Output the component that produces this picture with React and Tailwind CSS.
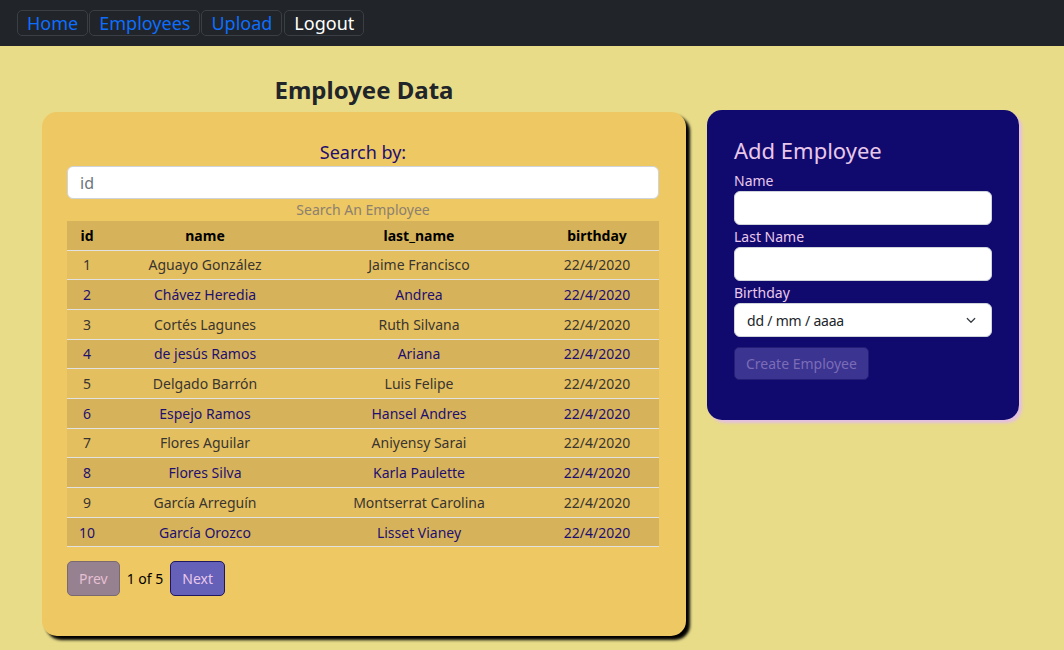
import React from "react";

const rows = [
  { id: 1, name: "Aguayo González", last: "Jaime Francisco" },
  { id: 2, name: "Chávez Heredia", last: "Andrea" },
  { id: 3, name: "Cortés Lagunes", last: "Ruth Silvana" },
  { id: 4, name: "de jesús Ramos", last: "Ariana" },
  { id: 5, name: "Delgado Barrón", last: "Luis Felipe" },
  { id: 6, name: "Espejo Ramos", last: "Hansel Andres" },
  { id: 7, name: "Flores Aguilar", last: "Aniyensy Sarai" },
  { id: 8, name: "Flores Silva", last: "Karla Paulette" },
  { id: 9, name: "García Arreguín", last: "Montserrat Carolina" },
  { id: 10, name: "García Orozco", last: "Lisset Vianey" },
];

// Top navigation bar
const Navbar = () => {
  const links = ["Home", "Employees", "Upload"];
  return (
    <nav className="h-[46px] bg-[#212529] flex items-center pl-[17px] gap-[1px]">
      {links.map((l) => (
        <a
          key={l}
          href="#"
          className="h-[26px] px-[9px] flex items-center border border-[#3a3f45] rounded-[5px] text-[18px] text-[#0d6efd]"
        >
          {l}
        </a>
      ))}
      <button className="ml-[1px] h-[26px] px-[9px] flex items-center border border-[#3a3f45] rounded-[5px] text-[18px] text-white">
        Logout
      </button>
    </nav>
  );
};

const EmployeeTable = () => (
  <table className="w-full border-collapse text-[14px] text-center">
    <thead>
      <tr className="bg-[#d6b35a] h-[29px] border-b border-[#e2e2e2]">
        <th className="w-[40px] font-bold text-black">id</th>
        <th className="w-[196px] font-bold text-black">name</th>
        <th className="w-[232px] font-bold text-black">last_name</th>
        <th className="font-bold text-black">birthday</th>
      </tr>
    </thead>
    <tbody>
      {rows.map((r, i) => (
        <tr
          key={r.id}
          className={
            i % 2 === 0
              ? "bg-[#e4bf5f] text-[#3a3530] h-[29.7px] border-b border-[#e2e2e2]"
              : "bg-[#d6b35a] text-[#1f0f70] h-[29.7px] border-b border-[#e2e2e2]"
          }
        >
          <td>{r.id}</td>
          <td>{r.name}</td>
          <td>{r.last}</td>
          <td>22/4/2020</td>
        </tr>
      ))}
    </tbody>
  </table>
);

const Field = ({ label, children }) => (
  <div className="flex flex-col">
    <label className="text-[14px] text-[#e8c8ea] leading-[20px]">{label}</label>
    {children}
  </div>
);

export default function App() {
  return (
    <div
      className="min-h-[650px] bg-[#e8dc88]"
      style={{ fontFamily: '"Noto Sans", "Open Sans", sans-serif' }}
    >
      <Navbar />
      <div className="flex items-start pl-[42px] pt-[28px] gap-[21px]">
        {/* Left column: employee list */}
        <div className="w-[644px] flex flex-col items-center">
          <h1 className="text-[24px] font-bold text-[#212529] leading-[32px] mb-[6px]">Employee Data</h1>
          <div className="w-full h-[524px] bg-[#eec862] rounded-[15px] shadow-[4px_4px_3px_#000] pl-[25px] pr-[27px] pt-[28px]">
            <p className="text-center text-[18px] text-[#1f0f70] leading-[24px] mb-[2px]">Search by:</p>
            <input
              placeholder="id"
              className="w-full h-[33px] bg-white rounded-[6px] border border-[#ced4da] px-[12px] text-[16px] placeholder:text-[#6c757d] outline-none"
            />
            <p className="text-center text-[14px] text-[#8c8070] leading-[22px]">Search An Employee</p>
            <EmployeeTable />
            <div className="flex items-center gap-[7px] mt-[14px]">
              <button className="h-[35px] px-[11px] bg-[#968190] border border-[#7a6a70] rounded-[5px] text-[14px] text-[#e5bfd2]">
                Prev
              </button>
              <span className="text-[14px] text-black">1 of 5</span>
              <button className="h-[35px] px-[11px] bg-[#6560b8] border border-[#1f1860] rounded-[5px] text-[14px] text-[#e8c8ea]">
                Next
              </button>
            </div>
          </div>
        </div>

        {/* Right column: create form */}
        <div className="w-[312px] h-[310px] mt-[36px] bg-[#110a6e] rounded-[15px] shadow-[3px_3px_3px_#e4c0e0] px-[27px] pt-[25px]">
          <h2 className="text-[22px] text-[#e8c8ea] leading-[30px] mb-[6px]">Add Employee</h2>
          <div className="flex flex-col gap-[2px]">
            <Field label="Name">
              <input className="h-[34px] bg-white rounded-[6px] border border-[#ced4da] outline-none" />
            </Field>
            <Field label="Last Name">
              <input className="h-[34px] bg-white rounded-[6px] border border-[#ced4da] outline-none" />
            </Field>
            <Field label="Birthday">
              <div className="h-[34px] bg-white rounded-[6px] border border-[#ced4da] flex items-center justify-between pl-[12px] pr-[14px]">
                <span className="text-[14px] text-[#212529] tracking-[-0.2px]">dd / mm / aaaa</span>
                <svg width="12" height="12" viewBox="0 0 16 16" fill="none" stroke="#343a40" strokeWidth="1.6" strokeLinecap="round" strokeLinejoin="round">
                  <path d="M3 6l5 5 5-5" />
                </svg>
              </div>
            </Field>
          </div>
          <button className="mt-[10px] h-[33px] px-[11px] bg-[#3b3490] border border-[#251e78] rounded-[5px] text-[14px] text-[#7c6cb8]">
            Create Employee
          </button>
        </div>
      </div>
    </div>
  );
}
